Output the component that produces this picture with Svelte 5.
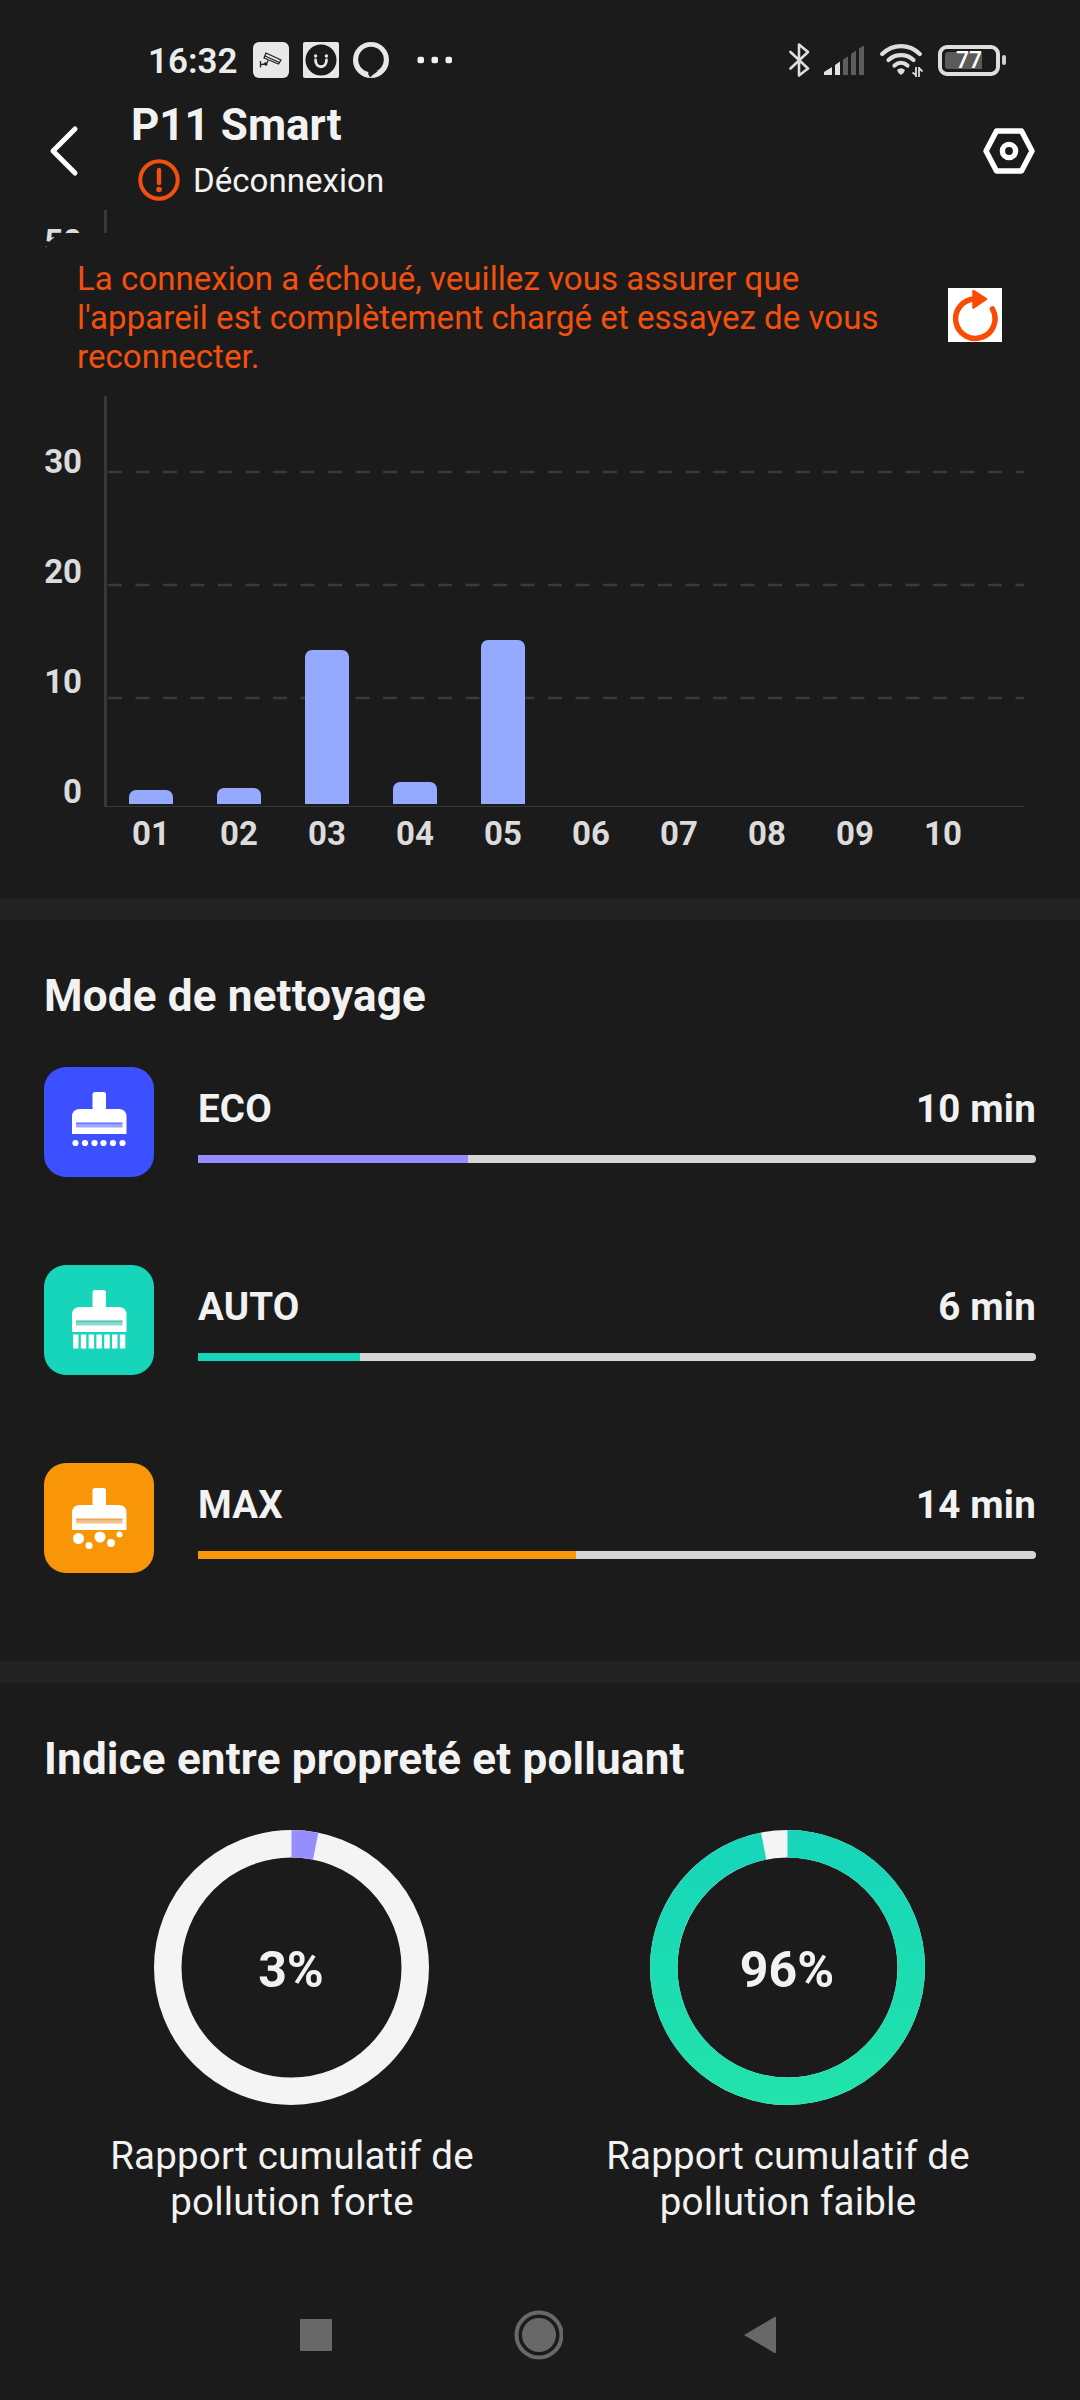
<script lang="ts">
  // 40 sits behind the banner, so its tick stays unlabelled
  const yLabels = ['50', '', '30', '20', '10', '0'];
  const gridLines = [36, 149, 262, 375, 488];

  // bar heights in px
  const days = [
    { label: '01', height: 14 },
    { label: '02', height: 16 },
    { label: '03', height: 154 },
    { label: '04', height: 22 },
    { label: '05', height: 164 },
    { label: '06', height: 0 },
    { label: '07', height: 0 },
    { label: '08', height: 0 },
    { label: '09', height: 0 },
    { label: '10', height: 0 }
  ];

  const modes = [
    { id: 'eco', name: 'ECO', minutes: 10 },
    { id: 'auto', name: 'AUTO', minutes: 6 },
    { id: 'max', name: 'MAX', minutes: 14 }
  ];
  const totalMinutes = 31;

  const radius = 123.75;
  const circumference = 2 * Math.PI * radius;
  const ratios = [
    { text: '3%', value: 0.0313, stroke: '#948eff', line1: 'Rapport cumulatif de', line2: 'pollution forte' },
    { text: '96%', value: 0.9687, stroke: 'url(#clean)', line1: 'Rapport cumulatif de', line2: 'pollution faible' }
  ];
</script>

<div class="screen">
  <div class="status-bar">
    <span class="clock">16:32</span>
    <svg class="app-icon" width="36" height="36" viewBox="0 0 36 36">
      <rect width="36" height="36" rx="6" fill="#e8e8e8" />
      <g fill="none" stroke="#222" stroke-width="1.3" stroke-linejoin="round">
        <path d="M13 11 L28 18 L25.500 22 L11 16 Z M12 14 L26.500 20.500" />
        <path d="M15 18.500 L13.500 22 L8 22.500 M7.500 19 V25.500" />
        <path d="M12 20.500 L13.500 23.500" stroke-width="2.400" />
      </g>
    </svg>
    <svg class="app-icon" width="36" height="36" viewBox="0 0 36 36">
      <rect width="36" height="36" rx="2" fill="#e8e8e8" />
      <circle cx="18" cy="18" r="15.500" fill="#1b1b1b" />
      <path d="M12.500 18 C12.500 27 23.500 27 23.500 18" fill="none" stroke="#e8e8e8" stroke-width="2.800" stroke-linecap="round" />
      <circle cx="12.600" cy="14" r="1.700" fill="#e8e8e8" />
      <circle cx="23.400" cy="14" r="1.700" fill="#e8e8e8" />
    </svg>
    <svg class="ring" width="37" height="36" viewBox="0 0 37 36">
      <circle cx="18" cy="18" r="18" fill="#e8e8e8" />
      <circle cx="18" cy="17.500" r="12.800" fill="#1b1b1b" />
      <path d="M15.300 29.500 V32.500 L17.300 35.500 C19 32.500 22 32 25 29 Z" fill="#1b1b1b" />
    </svg>
    <svg width="36" height="8" viewBox="0 0 36 8" fill="#f2f2f2">
      <rect x=".5" y=".7" width="6.500" height="6.500" rx="2" />
      <rect x="14.500" y=".7" width="6.500" height="6.500" rx="2" />
      <rect x="28.500" y=".7" width="6.500" height="6.500" rx="2" />
    </svg>

    <div class="status-right">
      <svg width="22" height="36" viewBox="0 0 22 36" fill="none" stroke="#dedede" stroke-width="2.600" stroke-linejoin="round" stroke-linecap="round">
        <path d="M1.500 10 L19 26.500 L10 33.500 V2.500 L19 10 L1.500 26.500" />
      </svg>
      <svg class="signal" width="40" height="30" viewBox="0 0 40 30">
        <path d="M0 30 V27 L8 22 V30 Z" fill="#e2e2e2" />
        <path d="M11 30 V20 L16 16.500 V30 Z" fill="#e2e2e2" />
        <path d="M19 30 V14.500 L24 11.500 V30 Z M27 30 V9 L32 5.500 V30 Z M35 30 V3.500 L40 .5 V30 Z" fill="#5d5d5d" />
      </svg>
      <svg class="wifi" width="43" height="34" viewBox="0 0 43 34">
        <g fill="none" stroke="#dedede" stroke-width="4.200" stroke-linecap="round">
          <path d="M2.200 11 C13 .5 29 .5 39.800 11" />
          <path d="M8.500 17 C15.500 10.500 26.500 10.500 33.500 17" />
          <path d="M14.500 22.500 C18.500 19 23.500 19 27.500 22.500" />
        </g>
        <path d="M17 27 Q21 23.500 25 27 Q24.500 29.500 21 32 Q17.500 29.500 17 27 Z" fill="#dedede" />
        <path d="M36 24 V34 M39 24 V34 M32.500 29.500 L36 32 M39 25 L42.500 28.500" fill="none" stroke="#dedede" stroke-width="1.800" />
      </svg>
      <div class="battery">
        <div class="battery-body">
          <span class="battery-level"></span>
          <span class="battery-text">77</span>
        </div>
        <span class="battery-tip"></span>
      </div>
    </div>
  </div>

  <header>
    <svg class="back" width="30" height="52" viewBox="0 0 30 52" fill="none" stroke="#fff" stroke-width="5" stroke-linecap="round" stroke-linejoin="round">
      <path d="M26 4 L4 26 L26 48" />
    </svg>
    <div class="device">
      <h1>P11 Smart</h1>
      <div class="connection">
        <svg width="42" height="42" viewBox="0 0 42 42">
          <circle cx="21" cy="21" r="18.700" fill="none" stroke="#f4500d" stroke-width="4" />
          <path d="M21 11 V24" stroke="#f4500d" stroke-width="4.400" stroke-linecap="round" />
          <circle cx="21" cy="30.500" r="2.800" fill="#f4500d" />
        </svg>
        <span>Déconnexion</span>
      </div>
    </div>
    <svg class="settings" width="52" height="46" viewBox="0 0 52 46" fill="none" stroke="#fff">
      <path d="M13.500 3 H38.500 L49 23 L38.500 43 H13.500 L3 23 Z" stroke-width="5.400" stroke-linejoin="round" />
      <circle cx="26" cy="23" r="6.600" stroke-width="5.400" />
    </svg>
  </header>

  <section class="chart">
    <div class="banner">
      <p>La connexion a échoué, veuillez vous assurer que l'appareil est complètement chargé et essayez de vous reconnecter.</p>
      <svg width="54" height="54" viewBox="0 0 54 54">
        <rect width="54" height="54" fill="#fff" />
        <path d="M27 11 A19.700 19.700 0 1 0 44.500 21" fill="none" stroke="#fa4b05" stroke-width="5.500" stroke-linecap="round" />
        <path d="M25.500 3 L38 11 L25.500 19.500 Z" fill="#fa4b05" stroke="#fa4b05" stroke-width="2.500" stroke-linejoin="round" />
      </svg>
    </div>

    <div class="y-axis">
      {#each yLabels as label}
        <span>{label}</span>
      {/each}
    </div>
    <div>
      <div class="plot">
        <svg class="grid-lines" width="917" height="596">
          {#each gridLines as y}
            <line x1="1" x2="917" y1={y} y2={y} stroke="#3a3a3a" stroke-width="2.500" stroke-dasharray="14 13.5" />
          {/each}
        </svg>
        {#each days as day}
          <div class="slot"><div class="bar" style="height: {day.height}px"></div></div>
        {/each}
      </div>
      <div class="x-axis">
        {#each days as day}
          <span>{day.label}</span>
        {/each}
      </div>
    </div>
  </section>

  <section class="modes">
    <h2>Mode de nettoyage</h2>
    {#each modes as mode}
      <div class="mode {mode.id}">
        <svg class="tile" width="110" height="110" viewBox="0 0 110 110">
          <g fill="#fff">
            <rect x="48.500" y="25" width="13.500" height="18" rx="2.500" />
            <path d="M28 67 V50 Q28 42 36 42 H74.500 Q82.500 42 82.500 50 V67 Z" />
            {#if mode.id === 'eco'}
              {#each [31.500, 41, 50.500, 59.500, 69, 78.500] as cx}
                <circle {cx} cy="76" r="3.100" />
              {/each}
            {:else if mode.id === 'auto'}
              {#each [29, 36.800, 44.600, 52.400, 60.200, 68, 75.800] as x}
                <rect {x} y="69.500" width="5.500" height="14" />
              {/each}
            {:else}
              <circle cx="34.500" cy="75.500" r="5.500" />
              <circle cx="45" cy="82.500" r="3.500" />
              <circle cx="56" cy="74" r="5.500" />
              <circle cx="67" cy="80" r="4" />
              <circle cx="75.500" cy="71.500" r="3" />
            {/if}
          </g>
          <rect class="slit" x="32" y="55.500" width="46.500" height="5" opacity=".5" />
          <rect class="slit" x="32" y="55.500" width="46.500" height="1.700" opacity=".5" />
        </svg>
        <div class="mode-info">
          <div class="mode-text">
            <span>{mode.name}</span>
            <span>{mode.minutes} min</span>
          </div>
          <div class="track">
            <div class="fill" style="width: {(mode.minutes / totalMinutes) * 100}%"></div>
          </div>
        </div>
      </div>
    {/each}
  </section>

  <section class="ratios">
    <h2>Indice entre propreté et polluant</h2>
    <div class="ratio-list">
      {#each ratios as ratio}
        <div class="ratio">
          <div class="donut">
            <svg width="275" height="275" viewBox="0 0 275 275">
              <defs>
                <linearGradient id="clean" gradientUnits="userSpaceOnUse" x1="0" y1="0" x2="275" y2="0">
                  <stop offset="0" stop-color="#22e3aa" />
                  <stop offset="1" stop-color="#16d5bb" />
                </linearGradient>
              </defs>
              <g transform="rotate(-90 137.5 137.5)" fill="none" stroke-width="27.500">
                <circle cx="137.500" cy="137.500" r={radius} stroke="#f4f4f4" />
                <circle cx="137.500" cy="137.500" r={radius} stroke={ratio.stroke} stroke-dasharray="{circumference * ratio.value} {circumference}" />
              </g>
            </svg>
            <span class="percent">{ratio.text}</span>
          </div>
          <p>{ratio.line1}<br />{ratio.line2}</p>
        </div>
      {/each}
    </div>
  </section>

  <nav>
    <svg width="50" height="50" viewBox="0 0 50 50"><rect x="9" y="9" width="32" height="32" rx="1" /></svg>
    <svg width="50" height="50" viewBox="0 0 50 50">
      <circle cx="26" cy="25" r="17" />
      <circle cx="26" cy="25" r="22.500" class="outline" />
    </svg>
    <svg width="50" height="50" viewBox="0 0 50 50"><path d="M9 25 L39.500 7 Q41 6.500 41 8 V42 Q41 43.500 39.500 43 Z" /></svg>
  </nav>
</div>

<style>
  :global(body) {
    background: #1b1b1b;
  }

  .screen {
    display: flex;
    flex-direction: column;
    width: 1080px;
    height: 2400px;
    overflow: hidden;
    background: #1b1b1b;
    color: #f2f2f2;
    font-family: Roboto, "Liberation Sans", sans-serif;
  }

  h1, h2, p {
    margin: 0;
  }

  h1, h2 {
    font-size: 44px;
    line-height: 52px;
    font-weight: 700;
  }

  h1 {
    line-height: 50px;
  }

  h2 {
    letter-spacing: 0.19px;
  }

  .status-bar {
    display: flex;
    align-items: center;
    height: 100px;
    padding: 20px 74px 0 148px;
    box-sizing: border-box;
  }

  .clock {
    width: 90px;
    margin-right: 15px;
    padding-top: 2px;
    font-size: 35px;
    font-weight: 600;
    color: #ececec;
  }

  .app-icon {
    margin-right: 14px;
  }

  .ring {
    margin-right: 27px;
  }

  .status-right {
    display: flex;
    align-items: center;
    margin-left: auto;
  }

  .signal {
    margin: 0 16px 0 13px;
  }

  .wifi {
    margin-right: 15px;
  }

  .battery {
    display: flex;
    align-items: center;
    gap: 2px;
  }

  .battery-body {
    position: relative;
    display: flex;
    align-items: center;
    justify-content: center;
    width: 62px;
    height: 31px;
    box-sizing: border-box;
    border: 4px solid #dedede;
    border-radius: 9px;
  }

  .battery-level {
    position: absolute;
    left: 3px;
    top: 3px;
    width: 37px;
    height: 17px;
    border-radius: 3px 0 0 3px;
    background: #5a5a5a;
  }

  .battery-text {
    position: relative;
    font-size: 23px;
    line-height: 23px;
    font-weight: 500;
    color: #fff;
  }

  .battery-tip {
    width: 4px;
    height: 10px;
    border-radius: 2px;
    background: #d0d0d0;
  }

  header {
    display: flex;
    align-items: flex-start;
    height: 110px;
    padding: 0 45px 0 49px;
    box-sizing: border-box;
  }

  .back {
    margin: 25px 52px 0 0;
  }

  .settings {
    margin: 28px 0 0 auto;
  }

  .device {
    display: flex;
    flex-direction: column;
    gap: 8px;
  }

  .connection {
    display: flex;
    align-items: center;
    gap: 13px;
    padding: 1px 0 0 7px;
    font-size: 33px;
  }

  .connection span {
    padding-top: 1px;
    letter-spacing: 0.05px;
  }

  .chart {
    position: relative;
    display: flex;
    height: 688px;
    padding-left: 44px;
    box-sizing: border-box;
  }

  .banner {
    position: absolute;
    left: 44px;
    right: 44px;
    top: 23px;
    z-index: 1;
    display: flex;
    align-items: center;
    justify-content: space-between;
    height: 163px;
    padding: 0 34px 0 33px;
    box-sizing: border-box;
    border-radius: 24px;
    background: #1b1b1b;
    color: #f4500d;
  }

  .banner p {
    width: 825px;
    padding-top: 6px;
    font-size: 33px;
    line-height: 39px;
    letter-spacing: 0.05px;
  }

  .y-axis {
    display: flex;
    flex-direction: column;
    width: 38px;
    margin-right: 22px;
    padding-top: 12px;
    text-align: right;
  }

  .y-axis span {
    height: 110px;
  }

  .y-axis,
  .x-axis {
    font-size: 33px;
    line-height: 39px;
    font-weight: 700;
    color: #dcdcdc;
  }

  .plot {
    position: relative;
    display: flex;
    align-items: flex-end;
    width: 920px;
    height: 597px;
    padding-bottom: 2px;
    box-sizing: border-box;
    border-left: 3px solid #383838;
    border-bottom: 1px solid #383838;
  }

  .grid-lines {
    position: absolute;
    left: 0;
    top: 0;
  }

  .slot {
    position: relative;
    display: flex;
    justify-content: center;
    width: 88px;
  }

  .bar {
    width: 44px;
    border-radius: 7px 7px 0 0;
    background: #94a9ff;
  }

  .x-axis {
    display: flex;
    margin-top: 7px;
    padding-left: 3px;
  }

  .x-axis span {
    width: 88px;
    text-align: center;
  }

  .modes,
  .ratios {
    padding: 50px 44px 0;
    border-top: 22px solid #222;
    box-sizing: border-box;
  }

  .modes {
    height: 763px;
  }

  .ratios {
    height: 617px;
  }

  .mode {
    display: flex;
    gap: 44px;
    margin-top: 45px;
    margin-bottom: 88px;
  }

  .mode + .mode {
    margin-top: 0;
  }

  .tile {
    border-radius: 22px;
  }

  .mode-info {
    flex: 1;
    padding-top: 19px;
  }

  .mode-text {
    display: flex;
    justify-content: space-between;
    margin-bottom: 24px;
    font-size: 38.5px;
    line-height: 45px;
    font-weight: 700;
    letter-spacing: 0.2px;
  }

  .track {
    height: 8px;
    border-radius: 0 4px 4px 0;
    background: #d6d6d6;
  }

  .fill {
    height: 8px;
  }

  .eco .tile {
    background: #3d50ff;
  }

  .eco .slit {
    fill: #3d50ff;
  }

  .eco .fill {
    background: #958dff;
  }

  .auto .tile {
    background: #17d5ba;
  }

  .auto .slit {
    fill: #17b5a0;
  }

  .auto .fill {
    background: #17d5ba;
  }

  .max .tile {
    background: #f99608;
  }

  .max .slit {
    fill: #e58a20;
  }

  .max .fill {
    background: #f99608;
  }

  .ratio-list {
    display: grid;
    grid-template-columns: 1fr 1fr;
    margin-top: 45px;
  }

  .ratio {
    display: flex;
    flex-direction: column;
    align-items: center;
    gap: 28px;
  }

  .ratio p {
    font-size: 38.5px;
    line-height: 46px;
    letter-spacing: 0.2px;
    text-align: center;
  }

  .donut {
    position: relative;
    height: 275px;
    margin-right: 2px;
  }

  .percent {
    position: absolute;
    inset: 0;
    font-size: 50px;
    line-height: 280px;
    font-weight: 700;
    text-align: center;
  }

  nav {
    display: flex;
    justify-content: space-between;
    padding: 32px 295px 0 291px;
    fill: #686868;
  }

  nav .outline {
    fill: none;
    stroke: #686868;
    stroke-width: 4;
  }
</style>
